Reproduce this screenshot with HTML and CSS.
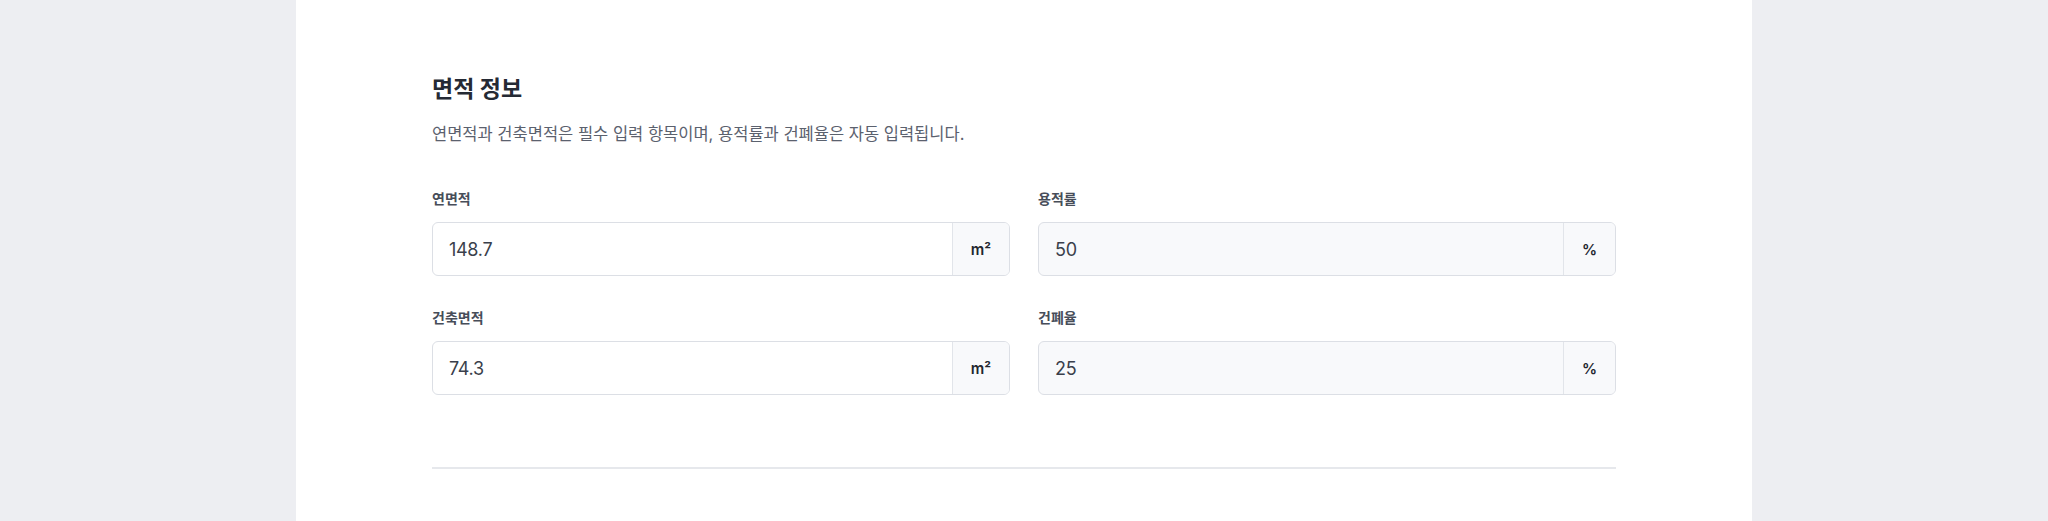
FILE: index.html
```html
<!DOCTYPE html>
<html lang="ko">
<head>
<meta charset="utf-8">
<title>면적 정보</title>
<link rel="stylesheet" href="styles.css">
</head>
<body>
<main class="page">
  <section class="section">
    <h2 class="section-title">면적 정보</h2>
    <p class="section-desc">연면적과 건축면적은 필수 입력 항목이며, 용적률과 건폐율은 자동 입력됩니다.</p>
    <div class="fields">
      <div class="field">
        <label class="field-label" for="f1">연면적</label>
        <div class="input-group">
          <input id="f1" class="input" type="text" value="148.7">
          <span class="unit">m²</span>
        </div>
      </div>
      <div class="field">
        <label class="field-label" for="f2">용적률</label>
        <div class="input-group is-readonly">
          <input id="f2" class="input" type="text" value="50" readonly>
          <span class="unit">%</span>
        </div>
      </div>
      <div class="field">
        <label class="field-label" for="f3">건축면적</label>
        <div class="input-group">
          <input id="f3" class="input" type="text" value="74.3">
          <span class="unit">m²</span>
        </div>
      </div>
      <div class="field">
        <label class="field-label" for="f4">건폐율</label>
        <div class="input-group is-readonly">
          <input id="f4" class="input" type="text" value="25" readonly>
          <span class="unit">%</span>
        </div>
      </div>
    </div>
    <hr class="divider">
  </section>
</main>
</body>
</html>
```
FILE: styles.css
```css
* { box-sizing: border-box; }

html, body {
  margin: 0;
  padding: 0;
}

body {
  background: #edeef2;
  font-family: "Inter", "Noto Sans CJK KR", "Noto Sans", sans-serif;
  color: #1f2937;
}

.page {
  width: 1456px;
  margin: 0 auto;
  background: #ffffff;
  min-height: 521px;
  padding: 74px 136px 60px;
}

.section-title {
  margin: 0;
  font-size: 23px;
  line-height: 30px;
  font-weight: 700;
  color: #252a34;
}

.section-desc {
  margin: 18px 0 0;
  font-size: 16.5px;
  line-height: 24px;
  color: #5b616e;
}

.fields {
  margin-top: 43px;
  display: grid;
  grid-template-columns: 1fr 1fr;
  column-gap: 28px;
  row-gap: 32px;
}

.field {
  display: flex;
  flex-direction: column;
  gap: 13px;
}

.field-label {
  font-size: 14px;
  line-height: 20px;
  font-weight: 600;
  color: #474d59;
}

.input-group {
  display: flex;
  height: 54px;
  border: 1px solid #dcdfe5;
  border-radius: 6px;
  overflow: hidden;
  background: #ffffff;
}

.input-group.is-readonly {
  background: #f8f9fb;
}

.input {
  flex: 1;
  min-width: 0;
  border: none;
  outline: none;
  background: transparent;
  padding: 0 16px;
  font-family: "Inter", "Noto Sans CJK KR", sans-serif;
  font-size: 18px;
  color: #3a3f4b;
  letter-spacing: -0.3px;
}

.unit {
  display: flex;
  align-items: center;
  justify-content: center;
  padding: 0 18px;
  min-width: 52px;
  border-left: 1px solid #e2e5ea;
  background: #f8f9fb;
  font-size: 15px;
  font-weight: 600;
  color: #23272f;
}

.divider {
  margin: 72px 0 0;
  border: none;
  border-top: 2px solid #e6e8ec;
}
```
